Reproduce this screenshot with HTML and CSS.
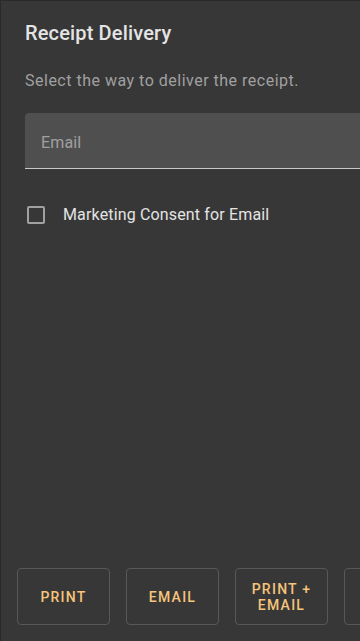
FILE: index.html
```html
<!DOCTYPE html>
<html lang="en">

<head>
    <meta charset="UTF-8" />
    <meta name="viewport" content="width=device-width, initial-scale=1.0" />
    <title>Receipt Delivery</title>
    <link rel="stylesheet" href="styles.css">
</head>

<body>
    <section class="dialog" aria-labelledby="dialog-title">
        <header class="dialog-head">
            <h2 id="dialog-title">Receipt Delivery</h2>
            <p class="dialog-text">Select the way to deliver the receipt.</p>
        </header>

        <!-- Filled text field -->
        <label class="field">
            <input type="email" placeholder="Email" />
        </label>

        <label class="check">
            <input type="checkbox" />
            <span class="check-box" aria-hidden="true"></span>
            <span>Marketing Consent for Email</span>
        </label>

        <div class="dialog-actions">
            <button type="button">Print</button>
            <button type="button">Email</button>
            <button type="button">Print +<br />Email</button>
            <!-- last action sits past the window edge -->
            <button type="button" aria-label="No receipt"></button>
        </div>
    </section>
</body>

</html>
```

FILE: styles.css
```css
:root {
    --color-surface: rgb(55, 55, 55);
    --color-edge: rgb(42, 42, 42);
    --color-field: rgb(79, 79, 79);
    --color-text: rgb(228, 228, 228);
    --color-muted: rgb(160, 160, 160);
    --color-accent: rgb(246, 196, 122);
}

* {
    box-sizing: border-box;
}

html,
body {
    height: 100%;
}

body {
    margin: 0;
    overflow: hidden;
    background: var(--color-surface);
    font-family: Roboto, "Noto Sans", sans-serif;
    color: var(--color-text);
}

/* The dialog runs past the right edge of the window */
.dialog {
    display: flex;
    flex-direction: column;
    width: 480px;
    height: 100%;
    border-top: 1px solid var(--color-edge);
    border-left: 1px solid var(--color-edge);
    background: var(--color-surface);
}

.dialog-head {
    padding: 18px 24px 0;
}

.dialog-head h2 {
    margin: 0;
    font-size: 20px;
    font-weight: 500;
    line-height: 28px;
    letter-spacing: 0.15px;
}

.dialog-text {
    margin: 22px 0 0;
    font-size: 16px;
    line-height: 24px;
    letter-spacing: 0.5px;
    color: var(--color-muted);
}

.field {
    display: block;
    margin: 20px 0 0 24px;
    background: var(--color-field);
    border-bottom: 1px solid rgb(200, 200, 200);
    border-radius: 4px 0 0 0;
}

.field input {
    display: block;
    width: 100%;
    height: 55px;
    padding: 4px 16px 0;
    border: 0;
    background: transparent;
    font: inherit;
    font-size: 16px;
    letter-spacing: 0.15px;
    color: var(--color-text);
    outline: none;
}

.field input::placeholder {
    color: var(--color-muted);
}

.check {
    display: flex;
    align-items: center;
    gap: 18px;
    margin: 36px 0 0 26px;
    font-size: 16px;
    letter-spacing: 0.15px;
}

.check input {
    position: absolute;
    opacity: 0;
}

.check-box {
    width: 18px;
    height: 18px;
    border: 2px solid var(--color-muted);
    border-radius: 2px;
}

.dialog-actions {
    display: flex;
    gap: 16px;
    margin-top: auto;
    padding: 0 0 16px 16px;
}

.dialog-actions button {
    flex: none;
    width: 93px;
    height: 57px;
    padding: 0 8px;
    border: 1px solid rgb(88, 88, 88);
    border-radius: 4px;
    background: transparent;
    font-family: inherit;
    font-size: 14px;
    font-weight: 500;
    line-height: 16px;
    letter-spacing: 1.25px;
    text-transform: uppercase;
    color: var(--color-accent);
}
```
